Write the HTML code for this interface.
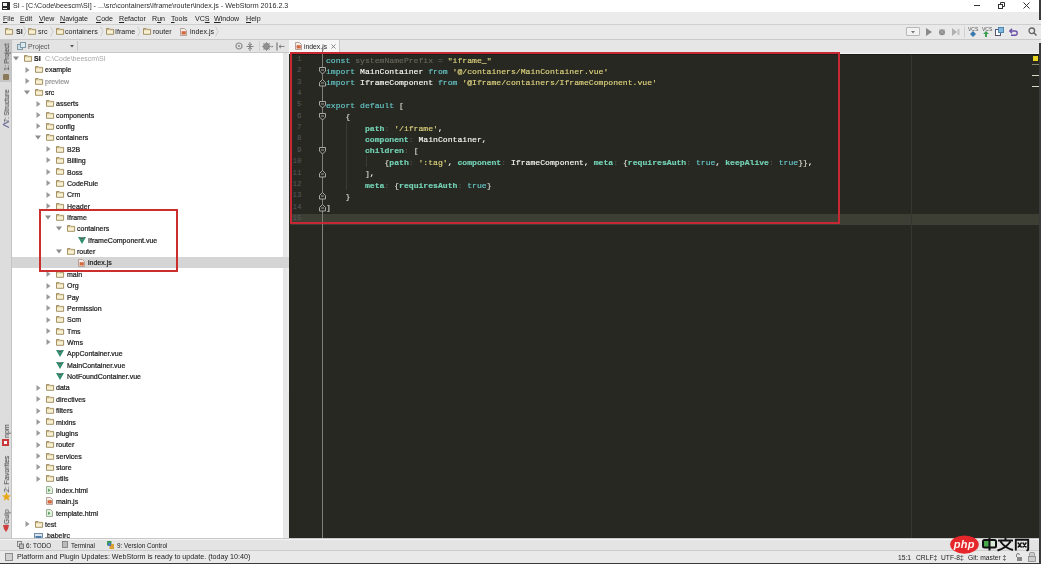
<!DOCTYPE html><html><head><meta charset="utf-8"><style>*{margin:0;padding:0;box-sizing:border-box}
html,body{width:1041px;height:564px;overflow:hidden;background:#e8e8e8;position:relative;font-family:"Liberation Sans", sans-serif}
.a{position:absolute}
.ic{position:absolute;overflow:visible}
.t{position:absolute;white-space:pre;font-size:7px;color:#1e1e1e;line-height:11px;will-change:transform}
.tr{-webkit-text-stroke:0.22px currentColor}
.code{position:absolute;white-space:pre;font-family:"Liberation Mono", monospace;font-size:8.12px;line-height:11.36px;color:#f8f8f2;will-change:transform;-webkit-text-stroke:0.15px currentColor}
.kw{color:#66c6c8}
.gr{color:#68675c}
.st{color:#ded37e}
.pr{color:#74d3b6;font-weight:bold}
.pu{color:#55554a}
.br{color:#d8d8cc}
.ln{position:absolute;font-family:"Liberation Mono", monospace;font-size:7.5px;color:#56595a;text-align:right;width:12px;line-height:11.36px}
</style></head><body><div class="a" style="left:0;top:0;width:1041px;height:12px;background:#ffffff"></div><div class="a" style="left:2px;top:2px;width:8px;height:8px;background:#2a2a2a"></div><div class="a" style="left:3px;top:3px;width:4px;height:3px;background:#f0f0f0"></div><div class="a" style="left:3px;top:8px;width:4px;height:1px;background:#f0f0f0"></div><div class="t" style="left:13px;top:1px;font-size:7.12px;color:#2a2a2a">SI - [C:\Code\beescm\SI] - ...\src\containers\Iframe\router\index.js - WebStorm 2016.2.3</div><div class="a" style="left:974px;top:5px;width:6px;height:1px;background:#333"></div><svg class="ic" style="left:998px;top:2px" width="7" height="7"><rect x="0.5" y="2.5" width="4" height="4" fill="none" stroke="#333"/><path d="M2.5 2.5 V0.5 H6.5 V4.5 H4.5" fill="none" stroke="#333"/></svg><svg class="ic" style="left:1023px;top:2px" width="7" height="7"><path d="M0.5 0.5 L6.5 6.5 M6.5 0.5 L0.5 6.5" stroke="#333" stroke-width="1"/></svg><div class="a" style="left:0;top:12px;width:1041px;height:12px;background:#ebebeb"></div><div class="a" style="left:0;top:23.5px;width:1041px;height:1px;background:#cfcfcf"></div><div class="t" style="left:3.3px;top:13.8px;font-size:7.1px;color:#222"><u>F</u>ile</div><div class="t" style="left:20px;top:13.8px;font-size:7.1px;color:#222"><u>E</u>dit</div><div class="t" style="left:39px;top:13.8px;font-size:7.1px;color:#222"><u>V</u>iew</div><div class="t" style="left:60px;top:13.8px;font-size:7.1px;color:#222"><u>N</u>avigate</div><div class="t" style="left:95.5px;top:13.8px;font-size:7.1px;color:#222"><u>C</u>ode</div><div class="t" style="left:118.8px;top:13.8px;font-size:7.1px;color:#222"><u>R</u>efactor</div><div class="t" style="left:152px;top:13.8px;font-size:7.1px;color:#222">R<u>u</u>n</div><div class="t" style="left:170.8px;top:13.8px;font-size:7.1px;color:#222"><u>T</u>ools</div><div class="t" style="left:194.8px;top:13.8px;font-size:7.1px;color:#222">VC<u>S</u></div><div class="t" style="left:214px;top:13.8px;font-size:7.1px;color:#222"><u>W</u>indow</div><div class="t" style="left:246px;top:13.8px;font-size:7.1px;color:#222"><u>H</u>elp</div><div class="a" style="left:0;top:24.5px;width:1041px;height:14.5px;background:#e9e9e9"></div><div class="a" style="left:0;top:39px;width:1041px;height:1px;background:#c9c9c9"></div><svg class="ic" style="left:5px;top:28px" width="9" height="8" viewBox="0 0 9 8"><path d="M0.5 0.7 H3.3 L4 1.4 H7.6 V6.3 H0.5 Z" fill="#f7f0d2" stroke="#a08c5e" stroke-width="0.95"/><path d="M0.5 0.9 H3.3" stroke="#a08c5e" stroke-width="1.3"/><path d="M1.2 2.3 H6.9" stroke="#e4d6a8" stroke-width="0.8"/></svg><div class="t" style="left:15.8px;top:26.5px;font-size:7.1px;font-weight:bold;color:#222">SI</div><svg class="ic" style="left:28.2px;top:28px" width="9" height="8" viewBox="0 0 9 8"><path d="M0.5 0.7 H3.3 L4 1.4 H7.6 V6.3 H0.5 Z" fill="#f7f0d2" stroke="#a08c5e" stroke-width="0.95"/><path d="M0.5 0.9 H3.3" stroke="#a08c5e" stroke-width="1.3"/><path d="M1.2 2.3 H6.9" stroke="#e4d6a8" stroke-width="0.8"/></svg><div class="t" style="left:38.2px;top:26.5px;font-size:7.1px;color:#222">src</div><svg class="ic" style="left:55.6px;top:28px" width="9" height="8" viewBox="0 0 9 8"><path d="M0.5 0.7 H3.3 L4 1.4 H7.6 V6.3 H0.5 Z" fill="#f7f0d2" stroke="#a08c5e" stroke-width="0.95"/><path d="M0.5 0.9 H3.3" stroke="#a08c5e" stroke-width="1.3"/><path d="M1.2 2.3 H6.9" stroke="#e4d6a8" stroke-width="0.8"/></svg><div class="t" style="left:65px;top:26.5px;font-size:7.1px;color:#222">containers</div><svg class="ic" style="left:105.5px;top:28px" width="9" height="8" viewBox="0 0 9 8"><path d="M0.5 0.7 H3.3 L4 1.4 H7.6 V6.3 H0.5 Z" fill="#f7f0d2" stroke="#a08c5e" stroke-width="0.95"/><path d="M0.5 0.9 H3.3" stroke="#a08c5e" stroke-width="1.3"/><path d="M1.2 2.3 H6.9" stroke="#e4d6a8" stroke-width="0.8"/></svg><div class="t" style="left:114.6px;top:26.5px;font-size:7.1px;color:#222">Iframe</div><svg class="ic" style="left:142.9px;top:28px" width="9" height="8" viewBox="0 0 9 8"><path d="M0.5 0.7 H3.3 L4 1.4 H7.6 V6.3 H0.5 Z" fill="#f7f0d2" stroke="#a08c5e" stroke-width="0.95"/><path d="M0.5 0.9 H3.3" stroke="#a08c5e" stroke-width="1.3"/><path d="M1.2 2.3 H6.9" stroke="#e4d6a8" stroke-width="0.8"/></svg><div class="t" style="left:152.5px;top:26.5px;font-size:7.1px;color:#222">router</div><svg class="ic" style="left:180px;top:28px" width="7" height="8" viewBox="0 0 7 8"><path d="M0.5 0.5 L4.5 0.5 L6.5 2.5 L6.5 7.5 L0.5 7.5 Z" fill="#f4ece8" stroke="#b0988e" stroke-width="0.9"/><rect x="1.6" y="3.2" width="4.2" height="3.3" fill="#d2683e"/></svg><div class="t" style="left:189.5px;top:26.5px;font-size:7.1px;color:#222">index.js</div><svg class="ic" style="left:23.1px;top:26px" width="4" height="11"><path d="M0.5 0.5 L3 5.5 L0.5 10.5" fill="none" stroke="#c4c4c4" stroke-width="0.8"/></svg><svg class="ic" style="left:50.0px;top:26px" width="4" height="11"><path d="M0.5 0.5 L3 5.5 L0.5 10.5" fill="none" stroke="#c4c4c4" stroke-width="0.8"/></svg><svg class="ic" style="left:99.5px;top:26px" width="4" height="11"><path d="M0.5 0.5 L3 5.5 L0.5 10.5" fill="none" stroke="#c4c4c4" stroke-width="0.8"/></svg><svg class="ic" style="left:137.2px;top:26px" width="4" height="11"><path d="M0.5 0.5 L3 5.5 L0.5 10.5" fill="none" stroke="#c4c4c4" stroke-width="0.8"/></svg><svg class="ic" style="left:214.9px;top:26px" width="4" height="11"><path d="M0.5 0.5 L3 5.5 L0.5 10.5" fill="none" stroke="#c4c4c4" stroke-width="0.8"/></svg><div class="a" style="left:906px;top:27px;width:14px;height:9px;background:#f2f2f2;border:1px solid #b8b8b8;border-radius:1px"></div><svg class="ic" style="left:911px;top:30.5px" width="4" height="3"><path d="M0 0 L4 0 L2 2.5Z" fill="#777"/></svg><svg class="ic" style="left:926px;top:27.5px" width="6" height="8"><path d="M0 0 L6 4 L0 8Z" fill="#8a8a8a"/></svg><svg class="ic" style="left:938px;top:27.5px" width="8" height="8"><circle cx="4" cy="4.3" r="3" fill="#8a8a8a"/><path d="M1 1 L7 7 M7 1 L1 7" stroke="#bbb" stroke-width="0.6"/></svg><svg class="ic" style="left:952px;top:27.5px" width="8" height="8"><path d="M0 0 L5 4 L0 8Z" fill="#b0b0b0"/><rect x="5.5" y="1" width="2" height="6" fill="#c0c0c0"/></svg><div class="a" style="left:964px;top:26px;width:1px;height:12px;background:#d0d0d0"></div><div class="t" style="left:968px;top:24px;font-size:5px;color:#555">VCS</div><svg class="ic" style="left:969.5px;top:31px" width="6" height="6"><path d="M3 0 L6 3 L3 6 L0 3Z" fill="#3a78b0"/></svg><div class="t" style="left:981.5px;top:24px;font-size:5px;color:#555">VCS</div><svg class="ic" style="left:983px;top:31px" width="6" height="6"><path d="M3 0 L6 3 L4 3 L4 6 L2 6 L2 3 L0 3Z" fill="#3aa050"/></svg><svg class="ic" style="left:995px;top:27px" width="9" height="9"><rect x="0.5" y="2.5" width="5" height="6" fill="#fff" stroke="#557" stroke-width="1"/><rect x="3.5" y="0.5" width="5" height="5" fill="#7fb8de" stroke="#4f86b0" stroke-width="1"/></svg><svg class="ic" style="left:1008.5px;top:27.5px" width="9" height="8"><path d="M3 0.8 L0.8 3 L3 5.2 M1 3 L6 3 Q8.2 3 8.2 5 Q8.2 7.2 6 7.2 L2 7.2" fill="none" stroke="#6a4fa8" stroke-width="1.4"/></svg><svg class="ic" style="left:1028px;top:27px" width="9" height="9"><circle cx="3.8" cy="3.8" r="2.8" fill="none" stroke="#666" stroke-width="1.3"/><path d="M5.8 5.8 L8.5 8.5" stroke="#666" stroke-width="1.5"/></svg><div class="a" style="left:1039px;top:0;width:2px;height:20px;background:#3a3a3a"></div><div class="a" style="left:1039px;top:43px;width:2px;height:521px;background:#3a3a3a"></div><div class="a" style="left:0;top:40px;width:11px;height:498px;background:#dddddd"></div><div class="a" style="left:11px;top:40px;width:1px;height:498px;background:#c4c4c4"></div><div class="a" style="left:0;top:40px;width:11px;height:42px;background:#c6c6c6"></div><div class="t" style="left:7px;top:56.5px;font-size:6.4px;color:#333;transform:translate(-50%,-50%) rotate(-90deg);line-height:8px">1: Project</div><div class="a" style="left:3px;top:74px;width:6px;height:6px;background:#8a7a5a;border-radius:1px"></div><div class="t" style="left:7px;top:105.5px;font-size:6.4px;color:#333;transform:translate(-50%,-50%) rotate(-90deg);line-height:8px">7: Structure</div><svg class="ic" style="left:2px;top:121px" width="8" height="7"><path d="M1 3.5 L7 0.5 M1 3.5 L7 6.5" stroke="#6a6a9a" stroke-width="1.2"/></svg><div class="t" style="left:7px;top:431px;font-size:7px;color:#333;transform:translate(-50%,-50%) rotate(-90deg);line-height:8px">npm</div><div class="a" style="left:2px;top:439px;width:7px;height:7px;background:#c83a3a"></div><div class="a" style="left:4px;top:441px;width:3px;height:3px;background:#fff"></div><div class="t" style="left:7px;top:474px;font-size:7px;color:#333;transform:translate(-50%,-50%) rotate(-90deg);line-height:8px">2: Favorites</div><svg class="ic" style="left:1.5px;top:492px" width="9" height="9"><path d="M4.5 0 L5.8 3.2 L9 3.4 L6.5 5.5 L7.3 8.8 L4.5 7 L1.7 8.8 L2.5 5.5 L0 3.4 L3.2 3.2Z" fill="#e8a818"/></svg><div class="t" style="left:7px;top:516.5px;font-size:7px;color:#333;transform:translate(-50%,-50%) rotate(-90deg);line-height:8px">Gulp</div><svg class="ic" style="left:3px;top:525px" width="6" height="7"><path d="M0 0 L6 0 L5 4 L3 7 L1 4Z" fill="#d04040"/></svg><div class="a" style="left:12px;top:40px;width:277px;height:12px;background:#e4e4e4"></div><div class="a" style="left:12px;top:52px;width:277px;height:1px;background:#c8c8c8"></div><svg class="ic" style="left:17px;top:41.5px" width="9" height="9"><rect x="0.5" y="2.5" width="5" height="5" fill="#cfe0e8" stroke="#7e98a6"/><rect x="3.5" y="0.5" width="5" height="5" fill="#dbe8ee" stroke="#7e98a6"/></svg><div class="t" style="left:27.7px;top:40.5px;font-size:6.9px;color:#555">Project</div><svg class="ic" style="left:70px;top:44.5px" width="4" height="3"><path d="M0 0 L4 0 L2 2.5Z" fill="#555"/></svg><div class="a" style="left:77px;top:41px;width:1px;height:10px;background:#c8c8c8"></div><svg class="ic" style="left:235px;top:42px" width="8" height="8"><circle cx="4" cy="4" r="3" fill="none" stroke="#8a8a8a" stroke-width="1.2"/><circle cx="4" cy="4" r="1" fill="#8a8a8a"/></svg><svg class="ic" style="left:246px;top:41.5px" width="8" height="9"><path d="M4 0 V9 M0.5 4.5 H7.5 M2 2 L4 3.5 L6 2 M2 7 L4 5.5 L6 7" fill="none" stroke="#777" stroke-width="0.9"/></svg><div class="a" style="left:258.5px;top:41px;width:1px;height:10px;background:#cfcfcf"></div><svg class="ic" style="left:262px;top:41.5px" width="12" height="9"><circle cx="4.5" cy="4.5" r="2.6" fill="none" stroke="#8a8a8a" stroke-width="1.6"/><path d="M4.5 0 V9 M0 4.5 H9 M1.3 1.3 L7.7 7.7 M7.7 1.3 L1.3 7.7" stroke="#8a8a8a" stroke-width="0.9"/><path d="M9.5 3.5 L11.5 4.5 L9.5 5.5Z" fill="#777"/></svg><svg class="ic" style="left:276px;top:41.5px" width="9" height="9"><path d="M1 0.5 V8.5" stroke="#8a8a8a" stroke-width="1.4"/><path d="M3 4.5 H8.5 M3 4.5 L5 2.8 M3 4.5 L5 6.2" stroke="#777" stroke-width="0.9" fill="none"/></svg><div class="a" style="left:12px;top:53px;width:271px;height:485px;background:#ffffff"></div><div class="a" style="left:283px;top:53px;width:6px;height:339px;background:#e6e6e6"></div><div class="a" style="left:287px;top:53px;width:2px;height:339px;background:#ececec"></div><svg class="ic" style="left:13.0px;top:55.7px" width="6" height="5"><path d="M0 0.5 L6 0.5 L3 4.5 Z" fill="#8c8c8c"/></svg><svg class="ic" style="left:24.1px;top:54.8px" width="9" height="8" viewBox="0 0 9 8"><path d="M0.5 0.7 H3.3 L4 1.4 H7.6 V6.3 H0.5 Z" fill="#f7f0d2" stroke="#a08c5e" stroke-width="0.95"/><path d="M0.5 0.9 H3.3" stroke="#a08c5e" stroke-width="1.3"/><path d="M1.2 2.3 H6.9" stroke="#e4d6a8" stroke-width="0.8"/></svg><div class="t tr" style="left:34.40px;top:52.90px;font-weight:bold;">SI</div><div class="t" style="left:45px;top:52.90px;color:#a6a6a6">C:\Code\beescm\SI</div><svg class="ic" style="left:24.8px;top:66.56px" width="5" height="6"><path d="M0.5 0 L4.5 3 L0.5 6 Z" fill="#9a9a9a"/></svg><svg class="ic" style="left:34.9px;top:66.16px" width="9" height="8" viewBox="0 0 9 8"><path d="M0.5 0.7 H3.3 L4 1.4 H7.6 V6.3 H0.5 Z" fill="#f7f0d2" stroke="#a08c5e" stroke-width="0.95"/><path d="M0.5 0.9 H3.3" stroke="#a08c5e" stroke-width="1.3"/><path d="M1.2 2.3 H6.9" stroke="#e4d6a8" stroke-width="0.8"/></svg><div class="t tr" style="left:45.15px;top:64.27px;">example</div><svg class="ic" style="left:24.8px;top:77.93px" width="5" height="6"><path d="M0.5 0 L4.5 3 L0.5 6 Z" fill="#9a9a9a"/></svg><svg class="ic" style="left:34.9px;top:77.53px" width="9" height="8" viewBox="0 0 9 8"><path d="M0.5 0.7 H3.3 L4 1.4 H7.6 V6.3 H0.5 Z" fill="#f7f0d2" stroke="#a08c5e" stroke-width="0.95"/><path d="M0.5 0.9 H3.3" stroke="#a08c5e" stroke-width="1.3"/><path d="M1.2 2.3 H6.9" stroke="#e4d6a8" stroke-width="0.8"/></svg><div class="t tr" style="left:45.15px;top:75.63px;color:#9a9a9a;">preview</div><svg class="ic" style="left:23.8px;top:89.8px" width="6" height="5"><path d="M0 0.5 L6 0.5 L3 4.5 Z" fill="#8c8c8c"/></svg><svg class="ic" style="left:34.9px;top:88.89px" width="9" height="8" viewBox="0 0 9 8"><path d="M0.5 0.7 H3.3 L4 1.4 H7.6 V6.3 H0.5 Z" fill="#f7f0d2" stroke="#a08c5e" stroke-width="0.95"/><path d="M0.5 0.9 H3.3" stroke="#a08c5e" stroke-width="1.3"/><path d="M1.2 2.3 H6.9" stroke="#e4d6a8" stroke-width="0.8"/></svg><div class="t tr" style="left:45.15px;top:87.00px;">src</div><svg class="ic" style="left:35.5px;top:100.66px" width="5" height="6"><path d="M0.5 0 L4.5 3 L0.5 6 Z" fill="#9a9a9a"/></svg><svg class="ic" style="left:45.6px;top:100.26px" width="9" height="8" viewBox="0 0 9 8"><path d="M0.5 0.7 H3.3 L4 1.4 H7.6 V6.3 H0.5 Z" fill="#f7f0d2" stroke="#a08c5e" stroke-width="0.95"/><path d="M0.5 0.9 H3.3" stroke="#a08c5e" stroke-width="1.3"/><path d="M1.2 2.3 H6.9" stroke="#e4d6a8" stroke-width="0.8"/></svg><div class="t tr" style="left:55.90px;top:98.36px;">asserts</div><svg class="ic" style="left:35.5px;top:112.03px" width="5" height="6"><path d="M0.5 0 L4.5 3 L0.5 6 Z" fill="#9a9a9a"/></svg><svg class="ic" style="left:45.6px;top:111.62px" width="9" height="8" viewBox="0 0 9 8"><path d="M0.5 0.7 H3.3 L4 1.4 H7.6 V6.3 H0.5 Z" fill="#f7f0d2" stroke="#a08c5e" stroke-width="0.95"/><path d="M0.5 0.9 H3.3" stroke="#a08c5e" stroke-width="1.3"/><path d="M1.2 2.3 H6.9" stroke="#e4d6a8" stroke-width="0.8"/></svg><div class="t tr" style="left:55.90px;top:109.73px;">components</div><svg class="ic" style="left:35.5px;top:123.39px" width="5" height="6"><path d="M0.5 0 L4.5 3 L0.5 6 Z" fill="#9a9a9a"/></svg><svg class="ic" style="left:45.6px;top:122.99px" width="9" height="8" viewBox="0 0 9 8"><path d="M0.5 0.7 H3.3 L4 1.4 H7.6 V6.3 H0.5 Z" fill="#f7f0d2" stroke="#a08c5e" stroke-width="0.95"/><path d="M0.5 0.9 H3.3" stroke="#a08c5e" stroke-width="1.3"/><path d="M1.2 2.3 H6.9" stroke="#e4d6a8" stroke-width="0.8"/></svg><div class="t tr" style="left:55.90px;top:121.09px;">config</div><svg class="ic" style="left:34.5px;top:135.25px" width="6" height="5"><path d="M0 0.5 L6 0.5 L3 4.5 Z" fill="#8c8c8c"/></svg><svg class="ic" style="left:45.6px;top:134.35px" width="9" height="8" viewBox="0 0 9 8"><path d="M0.5 0.7 H3.3 L4 1.4 H7.6 V6.3 H0.5 Z" fill="#f7f0d2" stroke="#a08c5e" stroke-width="0.95"/><path d="M0.5 0.9 H3.3" stroke="#a08c5e" stroke-width="1.3"/><path d="M1.2 2.3 H6.9" stroke="#e4d6a8" stroke-width="0.8"/></svg><div class="t tr" style="left:55.90px;top:132.45px;">containers</div><svg class="ic" style="left:46.2px;top:146.12px" width="5" height="6"><path d="M0.5 0 L4.5 3 L0.5 6 Z" fill="#9a9a9a"/></svg><svg class="ic" style="left:56.4px;top:145.72px" width="9" height="8" viewBox="0 0 9 8"><path d="M0.5 0.7 H3.3 L4 1.4 H7.6 V6.3 H0.5 Z" fill="#f7f0d2" stroke="#a08c5e" stroke-width="0.95"/><path d="M0.5 0.9 H3.3" stroke="#a08c5e" stroke-width="1.3"/><path d="M1.2 2.3 H6.9" stroke="#e4d6a8" stroke-width="0.8"/></svg><div class="t tr" style="left:66.65px;top:143.82px;">B2B</div><svg class="ic" style="left:46.2px;top:157.49px" width="5" height="6"><path d="M0.5 0 L4.5 3 L0.5 6 Z" fill="#9a9a9a"/></svg><svg class="ic" style="left:56.4px;top:157.09px" width="9" height="8" viewBox="0 0 9 8"><path d="M0.5 0.7 H3.3 L4 1.4 H7.6 V6.3 H0.5 Z" fill="#f7f0d2" stroke="#a08c5e" stroke-width="0.95"/><path d="M0.5 0.9 H3.3" stroke="#a08c5e" stroke-width="1.3"/><path d="M1.2 2.3 H6.9" stroke="#e4d6a8" stroke-width="0.8"/></svg><div class="t tr" style="left:66.65px;top:155.19px;">Billing</div><svg class="ic" style="left:46.2px;top:168.85px" width="5" height="6"><path d="M0.5 0 L4.5 3 L0.5 6 Z" fill="#9a9a9a"/></svg><svg class="ic" style="left:56.4px;top:168.45px" width="9" height="8" viewBox="0 0 9 8"><path d="M0.5 0.7 H3.3 L4 1.4 H7.6 V6.3 H0.5 Z" fill="#f7f0d2" stroke="#a08c5e" stroke-width="0.95"/><path d="M0.5 0.9 H3.3" stroke="#a08c5e" stroke-width="1.3"/><path d="M1.2 2.3 H6.9" stroke="#e4d6a8" stroke-width="0.8"/></svg><div class="t tr" style="left:66.65px;top:166.55px;">Boss</div><svg class="ic" style="left:46.2px;top:180.22px" width="5" height="6"><path d="M0.5 0 L4.5 3 L0.5 6 Z" fill="#9a9a9a"/></svg><svg class="ic" style="left:56.4px;top:179.81px" width="9" height="8" viewBox="0 0 9 8"><path d="M0.5 0.7 H3.3 L4 1.4 H7.6 V6.3 H0.5 Z" fill="#f7f0d2" stroke="#a08c5e" stroke-width="0.95"/><path d="M0.5 0.9 H3.3" stroke="#a08c5e" stroke-width="1.3"/><path d="M1.2 2.3 H6.9" stroke="#e4d6a8" stroke-width="0.8"/></svg><div class="t tr" style="left:66.65px;top:177.91px;">CodeRule</div><svg class="ic" style="left:46.2px;top:191.58px" width="5" height="6"><path d="M0.5 0 L4.5 3 L0.5 6 Z" fill="#9a9a9a"/></svg><svg class="ic" style="left:56.4px;top:191.18px" width="9" height="8" viewBox="0 0 9 8"><path d="M0.5 0.7 H3.3 L4 1.4 H7.6 V6.3 H0.5 Z" fill="#f7f0d2" stroke="#a08c5e" stroke-width="0.95"/><path d="M0.5 0.9 H3.3" stroke="#a08c5e" stroke-width="1.3"/><path d="M1.2 2.3 H6.9" stroke="#e4d6a8" stroke-width="0.8"/></svg><div class="t tr" style="left:66.65px;top:189.28px;">Crm</div><svg class="ic" style="left:46.2px;top:202.94px" width="5" height="6"><path d="M0.5 0 L4.5 3 L0.5 6 Z" fill="#9a9a9a"/></svg><svg class="ic" style="left:56.4px;top:202.54px" width="9" height="8" viewBox="0 0 9 8"><path d="M0.5 0.7 H3.3 L4 1.4 H7.6 V6.3 H0.5 Z" fill="#f7f0d2" stroke="#a08c5e" stroke-width="0.95"/><path d="M0.5 0.9 H3.3" stroke="#a08c5e" stroke-width="1.3"/><path d="M1.2 2.3 H6.9" stroke="#e4d6a8" stroke-width="0.8"/></svg><div class="t tr" style="left:66.65px;top:200.64px;">Header</div><svg class="ic" style="left:45.2px;top:214.81px" width="6" height="5"><path d="M0 0.5 L6 0.5 L3 4.5 Z" fill="#8c8c8c"/></svg><svg class="ic" style="left:56.4px;top:213.91px" width="9" height="8" viewBox="0 0 9 8"><path d="M0.5 0.7 H3.3 L4 1.4 H7.6 V6.3 H0.5 Z" fill="#f7f0d2" stroke="#a08c5e" stroke-width="0.95"/><path d="M0.5 0.9 H3.3" stroke="#a08c5e" stroke-width="1.3"/><path d="M1.2 2.3 H6.9" stroke="#e4d6a8" stroke-width="0.8"/></svg><div class="t tr" style="left:66.65px;top:212.01px;">Iframe</div><svg class="ic" style="left:56.0px;top:226.18px" width="6" height="5"><path d="M0 0.5 L6 0.5 L3 4.5 Z" fill="#8c8c8c"/></svg><svg class="ic" style="left:67.1px;top:225.28px" width="9" height="8" viewBox="0 0 9 8"><path d="M0.5 0.7 H3.3 L4 1.4 H7.6 V6.3 H0.5 Z" fill="#f7f0d2" stroke="#a08c5e" stroke-width="0.95"/><path d="M0.5 0.9 H3.3" stroke="#a08c5e" stroke-width="1.3"/><path d="M1.2 2.3 H6.9" stroke="#e4d6a8" stroke-width="0.8"/></svg><div class="t tr" style="left:77.40px;top:223.38px;">containers</div><svg class="ic" style="left:77.8px;top:236.54px" width="8" height="7" viewBox="0 0 8 7"><path d="M0 0 L2.2 0 L4 3.2 L5.8 0 L8 0 L4 7 Z" fill="#2f8f6c"/><path d="M2.2 0 L3.3 0 L4 1.3 L4.7 0 L5.8 0 L4 3.2 Z" fill="#254848"/></svg><div class="t tr" style="left:88.15px;top:234.74px;">IframeComponent.vue</div><svg class="ic" style="left:56.0px;top:248.91px" width="6" height="5"><path d="M0 0.5 L6 0.5 L3 4.5 Z" fill="#8c8c8c"/></svg><svg class="ic" style="left:67.1px;top:248.01px" width="9" height="8" viewBox="0 0 9 8"><path d="M0.5 0.7 H3.3 L4 1.4 H7.6 V6.3 H0.5 Z" fill="#f7f0d2" stroke="#a08c5e" stroke-width="0.95"/><path d="M0.5 0.9 H3.3" stroke="#a08c5e" stroke-width="1.3"/><path d="M1.2 2.3 H6.9" stroke="#e4d6a8" stroke-width="0.8"/></svg><div class="t tr" style="left:77.40px;top:246.11px;">router</div><div class="a" style="left:12px;top:257.37px;width:277px;height:10.8px;background:#d5d5d5"></div><svg class="ic" style="left:78.2px;top:258.77px" width="7" height="8" viewBox="0 0 7 8"><path d="M0.5 0.5 L4.5 0.5 L6.5 2.5 L6.5 7.5 L0.5 7.5 Z" fill="#f4ece8" stroke="#b0988e" stroke-width="0.9"/><rect x="1.6" y="3.2" width="4.2" height="3.3" fill="#d2683e"/></svg><div class="t tr" style="left:88.15px;top:257.47px;">index.js</div><svg class="ic" style="left:46.2px;top:271.13px" width="5" height="6"><path d="M0.5 0 L4.5 3 L0.5 6 Z" fill="#9a9a9a"/></svg><svg class="ic" style="left:56.4px;top:270.74px" width="9" height="8" viewBox="0 0 9 8"><path d="M0.5 0.7 H3.3 L4 1.4 H7.6 V6.3 H0.5 Z" fill="#f7f0d2" stroke="#a08c5e" stroke-width="0.95"/><path d="M0.5 0.9 H3.3" stroke="#a08c5e" stroke-width="1.3"/><path d="M1.2 2.3 H6.9" stroke="#e4d6a8" stroke-width="0.8"/></svg><div class="t tr" style="left:66.65px;top:268.83px;">main</div><svg class="ic" style="left:46.2px;top:282.5px" width="5" height="6"><path d="M0.5 0 L4.5 3 L0.5 6 Z" fill="#9a9a9a"/></svg><svg class="ic" style="left:56.4px;top:282.1px" width="9" height="8" viewBox="0 0 9 8"><path d="M0.5 0.7 H3.3 L4 1.4 H7.6 V6.3 H0.5 Z" fill="#f7f0d2" stroke="#a08c5e" stroke-width="0.95"/><path d="M0.5 0.9 H3.3" stroke="#a08c5e" stroke-width="1.3"/><path d="M1.2 2.3 H6.9" stroke="#e4d6a8" stroke-width="0.8"/></svg><div class="t tr" style="left:66.65px;top:280.20px;">Org</div><svg class="ic" style="left:46.2px;top:293.87px" width="5" height="6"><path d="M0.5 0 L4.5 3 L0.5 6 Z" fill="#9a9a9a"/></svg><svg class="ic" style="left:56.4px;top:293.47px" width="9" height="8" viewBox="0 0 9 8"><path d="M0.5 0.7 H3.3 L4 1.4 H7.6 V6.3 H0.5 Z" fill="#f7f0d2" stroke="#a08c5e" stroke-width="0.95"/><path d="M0.5 0.9 H3.3" stroke="#a08c5e" stroke-width="1.3"/><path d="M1.2 2.3 H6.9" stroke="#e4d6a8" stroke-width="0.8"/></svg><div class="t tr" style="left:66.65px;top:291.56px;">Pay</div><svg class="ic" style="left:46.2px;top:305.23px" width="5" height="6"><path d="M0.5 0 L4.5 3 L0.5 6 Z" fill="#9a9a9a"/></svg><svg class="ic" style="left:56.4px;top:304.83px" width="9" height="8" viewBox="0 0 9 8"><path d="M0.5 0.7 H3.3 L4 1.4 H7.6 V6.3 H0.5 Z" fill="#f7f0d2" stroke="#a08c5e" stroke-width="0.95"/><path d="M0.5 0.9 H3.3" stroke="#a08c5e" stroke-width="1.3"/><path d="M1.2 2.3 H6.9" stroke="#e4d6a8" stroke-width="0.8"/></svg><div class="t tr" style="left:66.65px;top:302.93px;">Permission</div><svg class="ic" style="left:46.2px;top:316.59px" width="5" height="6"><path d="M0.5 0 L4.5 3 L0.5 6 Z" fill="#9a9a9a"/></svg><svg class="ic" style="left:56.4px;top:316.19px" width="9" height="8" viewBox="0 0 9 8"><path d="M0.5 0.7 H3.3 L4 1.4 H7.6 V6.3 H0.5 Z" fill="#f7f0d2" stroke="#a08c5e" stroke-width="0.95"/><path d="M0.5 0.9 H3.3" stroke="#a08c5e" stroke-width="1.3"/><path d="M1.2 2.3 H6.9" stroke="#e4d6a8" stroke-width="0.8"/></svg><div class="t tr" style="left:66.65px;top:314.29px;">Scm</div><svg class="ic" style="left:46.2px;top:327.96px" width="5" height="6"><path d="M0.5 0 L4.5 3 L0.5 6 Z" fill="#9a9a9a"/></svg><svg class="ic" style="left:56.4px;top:327.56px" width="9" height="8" viewBox="0 0 9 8"><path d="M0.5 0.7 H3.3 L4 1.4 H7.6 V6.3 H0.5 Z" fill="#f7f0d2" stroke="#a08c5e" stroke-width="0.95"/><path d="M0.5 0.9 H3.3" stroke="#a08c5e" stroke-width="1.3"/><path d="M1.2 2.3 H6.9" stroke="#e4d6a8" stroke-width="0.8"/></svg><div class="t tr" style="left:66.65px;top:325.66px;">Tms</div><svg class="ic" style="left:46.2px;top:339.32px" width="5" height="6"><path d="M0.5 0 L4.5 3 L0.5 6 Z" fill="#9a9a9a"/></svg><svg class="ic" style="left:56.4px;top:338.93px" width="9" height="8" viewBox="0 0 9 8"><path d="M0.5 0.7 H3.3 L4 1.4 H7.6 V6.3 H0.5 Z" fill="#f7f0d2" stroke="#a08c5e" stroke-width="0.95"/><path d="M0.5 0.9 H3.3" stroke="#a08c5e" stroke-width="1.3"/><path d="M1.2 2.3 H6.9" stroke="#e4d6a8" stroke-width="0.8"/></svg><div class="t tr" style="left:66.65px;top:337.02px;">Wms</div><svg class="ic" style="left:56.2px;top:350.19px" width="8" height="7" viewBox="0 0 8 7"><path d="M0 0 L2.2 0 L4 3.2 L5.8 0 L8 0 L4 7 Z" fill="#2f8f6c"/><path d="M2.2 0 L3.3 0 L4 1.3 L4.7 0 L5.8 0 L4 3.2 Z" fill="#254848"/></svg><div class="t tr" style="left:66.65px;top:348.39px;">AppContainer.vue</div><svg class="ic" style="left:56.2px;top:361.56px" width="8" height="7" viewBox="0 0 8 7"><path d="M0 0 L2.2 0 L4 3.2 L5.8 0 L8 0 L4 7 Z" fill="#2f8f6c"/><path d="M2.2 0 L3.3 0 L4 1.3 L4.7 0 L5.8 0 L4 3.2 Z" fill="#254848"/></svg><div class="t tr" style="left:66.65px;top:359.75px;">MainContainer.vue</div><svg class="ic" style="left:56.2px;top:372.92px" width="8" height="7" viewBox="0 0 8 7"><path d="M0 0 L2.2 0 L4 3.2 L5.8 0 L8 0 L4 7 Z" fill="#2f8f6c"/><path d="M2.2 0 L3.3 0 L4 1.3 L4.7 0 L5.8 0 L4 3.2 Z" fill="#254848"/></svg><div class="t tr" style="left:66.65px;top:371.12px;">NotFoundContainer.vue</div><svg class="ic" style="left:35.5px;top:384.78px" width="5" height="6"><path d="M0.5 0 L4.5 3 L0.5 6 Z" fill="#9a9a9a"/></svg><svg class="ic" style="left:45.6px;top:384.38px" width="9" height="8" viewBox="0 0 9 8"><path d="M0.5 0.7 H3.3 L4 1.4 H7.6 V6.3 H0.5 Z" fill="#f7f0d2" stroke="#a08c5e" stroke-width="0.95"/><path d="M0.5 0.9 H3.3" stroke="#a08c5e" stroke-width="1.3"/><path d="M1.2 2.3 H6.9" stroke="#e4d6a8" stroke-width="0.8"/></svg><div class="t tr" style="left:55.90px;top:382.48px;">data</div><svg class="ic" style="left:35.5px;top:396.15px" width="5" height="6"><path d="M0.5 0 L4.5 3 L0.5 6 Z" fill="#9a9a9a"/></svg><svg class="ic" style="left:45.6px;top:395.75px" width="9" height="8" viewBox="0 0 9 8"><path d="M0.5 0.7 H3.3 L4 1.4 H7.6 V6.3 H0.5 Z" fill="#f7f0d2" stroke="#a08c5e" stroke-width="0.95"/><path d="M0.5 0.9 H3.3" stroke="#a08c5e" stroke-width="1.3"/><path d="M1.2 2.3 H6.9" stroke="#e4d6a8" stroke-width="0.8"/></svg><div class="t tr" style="left:55.90px;top:393.85px;">directives</div><svg class="ic" style="left:35.5px;top:407.51px" width="5" height="6"><path d="M0.5 0 L4.5 3 L0.5 6 Z" fill="#9a9a9a"/></svg><svg class="ic" style="left:45.6px;top:407.12px" width="9" height="8" viewBox="0 0 9 8"><path d="M0.5 0.7 H3.3 L4 1.4 H7.6 V6.3 H0.5 Z" fill="#f7f0d2" stroke="#a08c5e" stroke-width="0.95"/><path d="M0.5 0.9 H3.3" stroke="#a08c5e" stroke-width="1.3"/><path d="M1.2 2.3 H6.9" stroke="#e4d6a8" stroke-width="0.8"/></svg><div class="t tr" style="left:55.90px;top:405.21px;">filters</div><svg class="ic" style="left:35.5px;top:418.88px" width="5" height="6"><path d="M0.5 0 L4.5 3 L0.5 6 Z" fill="#9a9a9a"/></svg><svg class="ic" style="left:45.6px;top:418.48px" width="9" height="8" viewBox="0 0 9 8"><path d="M0.5 0.7 H3.3 L4 1.4 H7.6 V6.3 H0.5 Z" fill="#f7f0d2" stroke="#a08c5e" stroke-width="0.95"/><path d="M0.5 0.9 H3.3" stroke="#a08c5e" stroke-width="1.3"/><path d="M1.2 2.3 H6.9" stroke="#e4d6a8" stroke-width="0.8"/></svg><div class="t tr" style="left:55.90px;top:416.58px;">mixins</div><svg class="ic" style="left:35.5px;top:430.25px" width="5" height="6"><path d="M0.5 0 L4.5 3 L0.5 6 Z" fill="#9a9a9a"/></svg><svg class="ic" style="left:45.6px;top:429.85px" width="9" height="8" viewBox="0 0 9 8"><path d="M0.5 0.7 H3.3 L4 1.4 H7.6 V6.3 H0.5 Z" fill="#f7f0d2" stroke="#a08c5e" stroke-width="0.95"/><path d="M0.5 0.9 H3.3" stroke="#a08c5e" stroke-width="1.3"/><path d="M1.2 2.3 H6.9" stroke="#e4d6a8" stroke-width="0.8"/></svg><div class="t tr" style="left:55.90px;top:427.94px;">plugins</div><svg class="ic" style="left:35.5px;top:441.61px" width="5" height="6"><path d="M0.5 0 L4.5 3 L0.5 6 Z" fill="#9a9a9a"/></svg><svg class="ic" style="left:45.6px;top:441.21px" width="9" height="8" viewBox="0 0 9 8"><path d="M0.5 0.7 H3.3 L4 1.4 H7.6 V6.3 H0.5 Z" fill="#f7f0d2" stroke="#a08c5e" stroke-width="0.95"/><path d="M0.5 0.9 H3.3" stroke="#a08c5e" stroke-width="1.3"/><path d="M1.2 2.3 H6.9" stroke="#e4d6a8" stroke-width="0.8"/></svg><div class="t tr" style="left:55.90px;top:439.31px;">router</div><svg class="ic" style="left:35.5px;top:452.98px" width="5" height="6"><path d="M0.5 0 L4.5 3 L0.5 6 Z" fill="#9a9a9a"/></svg><svg class="ic" style="left:45.6px;top:452.58px" width="9" height="8" viewBox="0 0 9 8"><path d="M0.5 0.7 H3.3 L4 1.4 H7.6 V6.3 H0.5 Z" fill="#f7f0d2" stroke="#a08c5e" stroke-width="0.95"/><path d="M0.5 0.9 H3.3" stroke="#a08c5e" stroke-width="1.3"/><path d="M1.2 2.3 H6.9" stroke="#e4d6a8" stroke-width="0.8"/></svg><div class="t tr" style="left:55.90px;top:450.68px;">services</div><svg class="ic" style="left:35.5px;top:464.34px" width="5" height="6"><path d="M0.5 0 L4.5 3 L0.5 6 Z" fill="#9a9a9a"/></svg><svg class="ic" style="left:45.6px;top:463.94px" width="9" height="8" viewBox="0 0 9 8"><path d="M0.5 0.7 H3.3 L4 1.4 H7.6 V6.3 H0.5 Z" fill="#f7f0d2" stroke="#a08c5e" stroke-width="0.95"/><path d="M0.5 0.9 H3.3" stroke="#a08c5e" stroke-width="1.3"/><path d="M1.2 2.3 H6.9" stroke="#e4d6a8" stroke-width="0.8"/></svg><div class="t tr" style="left:55.90px;top:462.04px;">store</div><svg class="ic" style="left:35.5px;top:475.7px" width="5" height="6"><path d="M0.5 0 L4.5 3 L0.5 6 Z" fill="#9a9a9a"/></svg><svg class="ic" style="left:45.6px;top:475.31px" width="9" height="8" viewBox="0 0 9 8"><path d="M0.5 0.7 H3.3 L4 1.4 H7.6 V6.3 H0.5 Z" fill="#f7f0d2" stroke="#a08c5e" stroke-width="0.95"/><path d="M0.5 0.9 H3.3" stroke="#a08c5e" stroke-width="1.3"/><path d="M1.2 2.3 H6.9" stroke="#e4d6a8" stroke-width="0.8"/></svg><div class="t tr" style="left:55.90px;top:473.40px;">utils</div><svg class="ic" style="left:46.0px;top:486.07px" width="7" height="8" viewBox="0 0 7 8"><path d="M0.5 0.5 L4.5 0.5 L6.5 2.5 L6.5 7.5 L0.5 7.5 Z" fill="#e6f0e2" stroke="#90a88a" stroke-width="0.9"/><path d="M2.3 2.5 L4.3 4.3 L2.3 6.1 Z" fill="#2f8a3a"/></svg><div class="t tr" style="left:55.90px;top:484.77px;">index.html</div><svg class="ic" style="left:46.0px;top:497.44px" width="7" height="8" viewBox="0 0 7 8"><path d="M0.5 0.5 L4.5 0.5 L6.5 2.5 L6.5 7.5 L0.5 7.5 Z" fill="#f4ece8" stroke="#b0988e" stroke-width="0.9"/><rect x="1.6" y="3.2" width="4.2" height="3.3" fill="#d2683e"/></svg><div class="t tr" style="left:55.90px;top:496.13px;">main.js</div><svg class="ic" style="left:46.0px;top:508.8px" width="7" height="8" viewBox="0 0 7 8"><path d="M0.5 0.5 L4.5 0.5 L6.5 2.5 L6.5 7.5 L0.5 7.5 Z" fill="#e6f0e2" stroke="#90a88a" stroke-width="0.9"/><path d="M2.3 2.5 L4.3 4.3 L2.3 6.1 Z" fill="#2f8a3a"/></svg><div class="t tr" style="left:55.90px;top:507.50px;">template.html</div><svg class="ic" style="left:24.8px;top:521.17px" width="5" height="6"><path d="M0.5 0 L4.5 3 L0.5 6 Z" fill="#9a9a9a"/></svg><svg class="ic" style="left:34.9px;top:520.77px" width="9" height="8" viewBox="0 0 9 8"><path d="M0.5 0.7 H3.3 L4 1.4 H7.6 V6.3 H0.5 Z" fill="#f7f0d2" stroke="#a08c5e" stroke-width="0.95"/><path d="M0.5 0.9 H3.3" stroke="#a08c5e" stroke-width="1.3"/><path d="M1.2 2.3 H6.9" stroke="#e4d6a8" stroke-width="0.8"/></svg><div class="t tr" style="left:45.15px;top:518.87px;">test</div><svg class="ic" style="left:34.2px;top:531.53px" width="9" height="8" viewBox="0 0 9 8"><rect x="0.5" y="1.5" width="8" height="6" fill="#d8e4ee" stroke="#6e8ba8" stroke-width="1"/><rect x="1.5" y="4" width="6" height="2.5" fill="#4f7ca8"/></svg><div class="t tr" style="left:45.15px;top:530.23px;">.babelrc</div><div class="a" style="left:39px;top:208.5px;width:139px;height:63.5px;border:2px solid #cc2e2e"></div><div class="a" style="left:289px;top:40px;width:750px;height:12px;background:#e6e6e6"></div><div class="a" style="left:289px;top:40px;width:51px;height:12.5px;background:#f7f7f7;border-right:1px solid #c8c8c8"></div><svg class="ic" style="left:294.5px;top:42px" width="7" height="8" viewBox="0 0 7 8"><path d="M0.5 0.5 L4.5 0.5 L6.5 2.5 L6.5 7.5 L0.5 7.5 Z" fill="#f4ece8" stroke="#b0988e" stroke-width="0.9"/><rect x="1.6" y="3.2" width="4.2" height="3.3" fill="#d2683e"/></svg><div class="t" style="left:304px;top:41px;font-size:6.8px;color:#222">index.js</div><svg class="ic" style="left:330.5px;top:44px" width="5" height="5"><path d="M0.5 0.5 L4.5 4.5 M4.5 0.5 L0.5 4.5" stroke="#777" stroke-width="0.9"/></svg><div class="a" style="left:289px;top:52.5px;width:750px;height:1.5px;background:#f4f4f4"></div><div class="a" style="left:289px;top:54px;width:750px;height:484px;background:#272822"></div><div class="a" style="left:289px;top:54px;width:750px;height:1px;background:#1c1d18"></div><div class="a" style="left:291px;top:213.8px;width:748px;height:11.2px;background:#3d3e34"></div><div class="a" style="left:911px;top:55px;width:1px;height:483px;background:#35362f"></div><div class="a" style="left:346px;top:122px;width:1px;height:68px;background:#3a3b33"></div><div class="a" style="left:366px;top:156px;width:1px;height:11px;background:#3a3b33"></div><div class="ln" style="left:289.5px;top:53.92px">1</div><div class="ln" style="left:289.5px;top:65.28px">2</div><div class="ln" style="left:289.5px;top:76.64px">3</div><div class="ln" style="left:289.5px;top:88.00px">4</div><div class="ln" style="left:289.5px;top:99.36px">5</div><div class="ln" style="left:289.5px;top:110.72px">6</div><div class="ln" style="left:289.5px;top:122.08px">7</div><div class="ln" style="left:289.5px;top:133.44px">8</div><div class="ln" style="left:289.5px;top:144.80px">9</div><div class="ln" style="left:289.5px;top:156.16px">10</div><div class="ln" style="left:289.5px;top:167.52px">11</div><div class="ln" style="left:289.5px;top:178.88px">12</div><div class="ln" style="left:289.5px;top:190.24px">13</div><div class="ln" style="left:289.5px;top:201.60px">14</div><div class="ln" style="left:289.5px;top:212.96px">15</div><div class="a" style="left:322px;top:47px;width:1px;height:491px;background:#80807a"></div><svg class="ic" style="left:319px;top:67.26px" width="7" height="8"><path d="M0.5 0.5 H6.5 V4 L3.5 7 L0.5 4 Z" fill="#272822" stroke="#a8a8a4" stroke-width="1"/><path d="M2 3 H5" stroke="#a8a8a4" stroke-width="0.9"/></svg><svg class="ic" style="left:319px;top:78.62px" width="7" height="8"><path d="M0.5 7 H6.5 V3.5 L3.5 0.5 L0.5 3.5 Z" fill="#272822" stroke="#a8a8a4" stroke-width="1"/><path d="M2 4 H5" stroke="#a8a8a4" stroke-width="0.9"/></svg><svg class="ic" style="left:319px;top:101.34px" width="7" height="8"><path d="M0.5 0.5 H6.5 V4 L3.5 7 L0.5 4 Z" fill="#272822" stroke="#a8a8a4" stroke-width="1"/><path d="M2 3 H5" stroke="#a8a8a4" stroke-width="0.9"/></svg><svg class="ic" style="left:319px;top:112.70px" width="7" height="8"><path d="M0.5 0.5 H6.5 V4 L3.5 7 L0.5 4 Z" fill="#272822" stroke="#a8a8a4" stroke-width="1"/><path d="M2 3 H5" stroke="#a8a8a4" stroke-width="0.9"/></svg><svg class="ic" style="left:319px;top:146.78px" width="7" height="8"><path d="M0.5 0.5 H6.5 V4 L3.5 7 L0.5 4 Z" fill="#272822" stroke="#a8a8a4" stroke-width="1"/><path d="M2 3 H5" stroke="#a8a8a4" stroke-width="0.9"/></svg><svg class="ic" style="left:319px;top:169.50px" width="7" height="8"><path d="M0.5 7 H6.5 V3.5 L3.5 0.5 L0.5 3.5 Z" fill="#272822" stroke="#a8a8a4" stroke-width="1"/><path d="M2 4 H5" stroke="#a8a8a4" stroke-width="0.9"/></svg><svg class="ic" style="left:319px;top:192.22px" width="7" height="8"><path d="M0.5 7 H6.5 V3.5 L3.5 0.5 L0.5 3.5 Z" fill="#272822" stroke="#a8a8a4" stroke-width="1"/><path d="M2 4 H5" stroke="#a8a8a4" stroke-width="0.9"/></svg><svg class="ic" style="left:319px;top:203.58px" width="7" height="8"><path d="M0.5 7 H6.5 V3.5 L3.5 0.5 L0.5 3.5 Z" fill="#272822" stroke="#a8a8a4" stroke-width="1"/><path d="M2 4 H5" stroke="#a8a8a4" stroke-width="0.9"/></svg><div class="code" style="left:326px;top:54.60px"><span class="kw">const</span> <span class="gr">systemNamePrefix</span> <span class="gr">=</span> <span class="st">"iframe_"</span></div><div class="code" style="left:326px;top:65.96px"><span class="kw">import</span> MainContainer <span class="kw">from</span> <span class="st">'@/containers/MainContainer.vue'</span></div><div class="code" style="left:326px;top:77.32px"><span class="kw">import</span> IframeComponent <span class="kw">from</span> <span class="st">'@Iframe/containers/IframeComponent.vue'</span></div><div class="code" style="left:326px;top:88.68px"></div><div class="code" style="left:326px;top:100.04px"><span class="kw">export default</span> <span class="br">[</span></div><div class="code" style="left:326px;top:111.40px">    <span class="br">{</span></div><div class="code" style="left:326px;top:122.76px">        <span class="pr">path</span><span class="pu">:</span> <span class="st">'/iframe'</span>,</div><div class="code" style="left:326px;top:134.12px">        <span class="pr">component</span><span class="pu">:</span> MainContainer,</div><div class="code" style="left:326px;top:145.48px">        <span class="pr">children</span><span class="pu">:</span> <span class="br">[</span></div><div class="code" style="left:326px;top:156.84px">            <span class="br">{</span><span class="pr">path</span><span class="pu">:</span> <span class="st">':tag'</span>, <span class="pr">component</span><span class="pu">:</span> IframeComponent, <span class="pr">meta</span><span class="pu">:</span> <span class="br">{</span><span class="pr">requiresAuth</span><span class="pu">:</span> <span class="kw">true</span>, <span class="pr">keepAlive</span><span class="pu">:</span> <span class="kw">true</span><span class="br">}}</span>,</div><div class="code" style="left:326px;top:168.20px">        <span class="br">]</span>,</div><div class="code" style="left:326px;top:179.56px">        <span class="pr">meta</span><span class="pu">:</span> <span class="br">{</span><span class="pr">requiresAuth</span><span class="pu">:</span> <span class="kw">true</span><span class="br">}</span></div><div class="code" style="left:326px;top:190.92px">    <span class="br">}</span></div><div class="code" style="left:326px;top:202.28px"><span class="br">]</span></div><div class="code" style="left:326px;top:213.64px"></div><div class="a" style="left:290px;top:51.5px;width:550px;height:172.5px;border:2px solid #c82834"></div><div class="a" style="left:1033px;top:56px;width:5px;height:5px;background:#e6d41e"></div><div class="a" style="left:1032px;top:64px;width:7px;height:1px;background:#8a8a70"></div><div class="a" style="left:1032px;top:75px;width:7px;height:1.2px;background:#d8d8c8"></div><div class="a" style="left:1032px;top:86px;width:7px;height:1.2px;background:#d8d8c8"></div><div class="a" style="left:0;top:538px;width:1039px;height:12px;background:#e4e4e4"></div><div class="a" style="left:0;top:538px;width:1039px;height:1px;background:#c8c8c8"></div><div class="a" style="left:0;top:539px;width:1039px;height:1px;background:#f4f4f4"></div><div class="a" style="left:0;top:549.5px;width:1039px;height:1px;background:#cdcdcd"></div><svg class="ic" style="left:16.5px;top:540.5px" width="7" height="8"><rect x="0.5" y="0.5" width="4" height="5" fill="#ddd" stroke="#777" stroke-width="0.8"/><rect x="2.5" y="3" width="4" height="4.5" fill="#bbb" stroke="#666" stroke-width="0.8"/></svg><div class="t" style="left:25.7px;top:539.5px;font-size:6.35px;color:#222">6: TODO</div><svg class="ic" style="left:61.5px;top:541px" width="6" height="7"><rect x="0.5" y="0.5" width="5" height="6" fill="#bbb" stroke="#777" stroke-width="0.8"/></svg><div class="t" style="left:70.6px;top:539.5px;font-size:6.35px;color:#222">Terminal</div><svg class="ic" style="left:107px;top:540.5px" width="7" height="8"><rect x="0" y="0" width="4.5" height="4.5" fill="#3a9a58"/><rect x="2.5" y="3" width="4.5" height="5" fill="#d8a030"/><rect x="1" y="2" width="3" height="3" fill="#4a78b8"/></svg><div class="t" style="left:117px;top:539.5px;font-size:6.35px;color:#222">9: Version Control</div><div class="a" style="left:0;top:550.5px;width:1039px;height:12.5px;background:#e9e9e9"></div><div class="a" style="left:0;top:563px;width:1041px;height:1px;background:#3a3a3a"></div><div class="a" style="left:5px;top:552.5px;width:7.5px;height:8px;background:#d0d0d0;border:1px solid #8a8a8a"></div><div class="t" style="left:16.6px;top:551.5px;font-size:7.15px;color:#222">Platform and Plugin Updates: WebStorm is ready to update. (today 10:40)</div><div class="t" style="left:897.6px;top:551.5px;font-size:6.7px;color:#222">15:1</div><div class="t" style="left:916px;top:551.5px;font-size:6.7px;color:#222">CRLF‡</div><div class="t" style="left:941px;top:551.5px;font-size:6.7px;color:#222">UTF-8‡</div><div class="t" style="left:967.7px;top:551.5px;font-size:6.7px;color:#222">Git: master ‡</div><svg class="ic" style="left:1015px;top:553px" width="7" height="8"><path d="M1.5 4 V2 Q1.5 0.5 3 0.5 Q4.5 0.5 4.5 2" fill="none" stroke="#666" stroke-width="0.8"/><rect x="2" y="4" width="5" height="4" fill="#888"/></svg><svg class="ic" style="left:1028px;top:552px" width="8" height="10"><rect x="1.5" y="0.5" width="5" height="4" rx="1" fill="#ccc" stroke="#888" stroke-width="0.8"/><rect x="0.5" y="4.5" width="7" height="5" fill="#ccc" stroke="#888" stroke-width="0.8"/></svg><svg class="ic" style="left:949px;top:534px" width="84" height="22" viewBox="0 0 84 22"><ellipse cx="15.45" cy="10.55" rx="14.3" ry="9.1" fill="#e5262b"/><text x="15.2" y="13.6" text-anchor="middle" font-family="Liberation Sans" font-weight="bold" font-style="italic" font-size="11" fill="#fff4f0" letter-spacing="0.3">php</text><rect x="34" y="6" width="6.5" height="7.5" fill="#49a84a"/><rect x="40.5" y="6" width="6.5" height="7.5" fill="#d8ecd8"/><rect x="34" y="6" width="13" height="7.5" rx="1.5" fill="none" stroke="#111" stroke-width="2"/><path d="M40.5 4 V16.5" stroke="#111" stroke-width="2"/><path d="M56.5 4 V6 M49 6.5 H64 M51.5 7.5 Q56 14 64 16 M61.5 7.5 Q57 14 48.5 16.5" fill="none" stroke="#111" stroke-width="1.9"/><path d="M66.8 16.5 V5.8 H79.2 V15.2 Q79.2 16.6 77.5 16.2" fill="none" stroke="#111" stroke-width="1.9"/><path d="M68.8 8.5 L72.6 13.5 M72.6 8.5 L68.8 13.5 M73.6 8.5 L77.4 13.5 M77.4 8.5 L73.6 13.5" fill="none" stroke="#111" stroke-width="1.3"/></svg></body></html>
